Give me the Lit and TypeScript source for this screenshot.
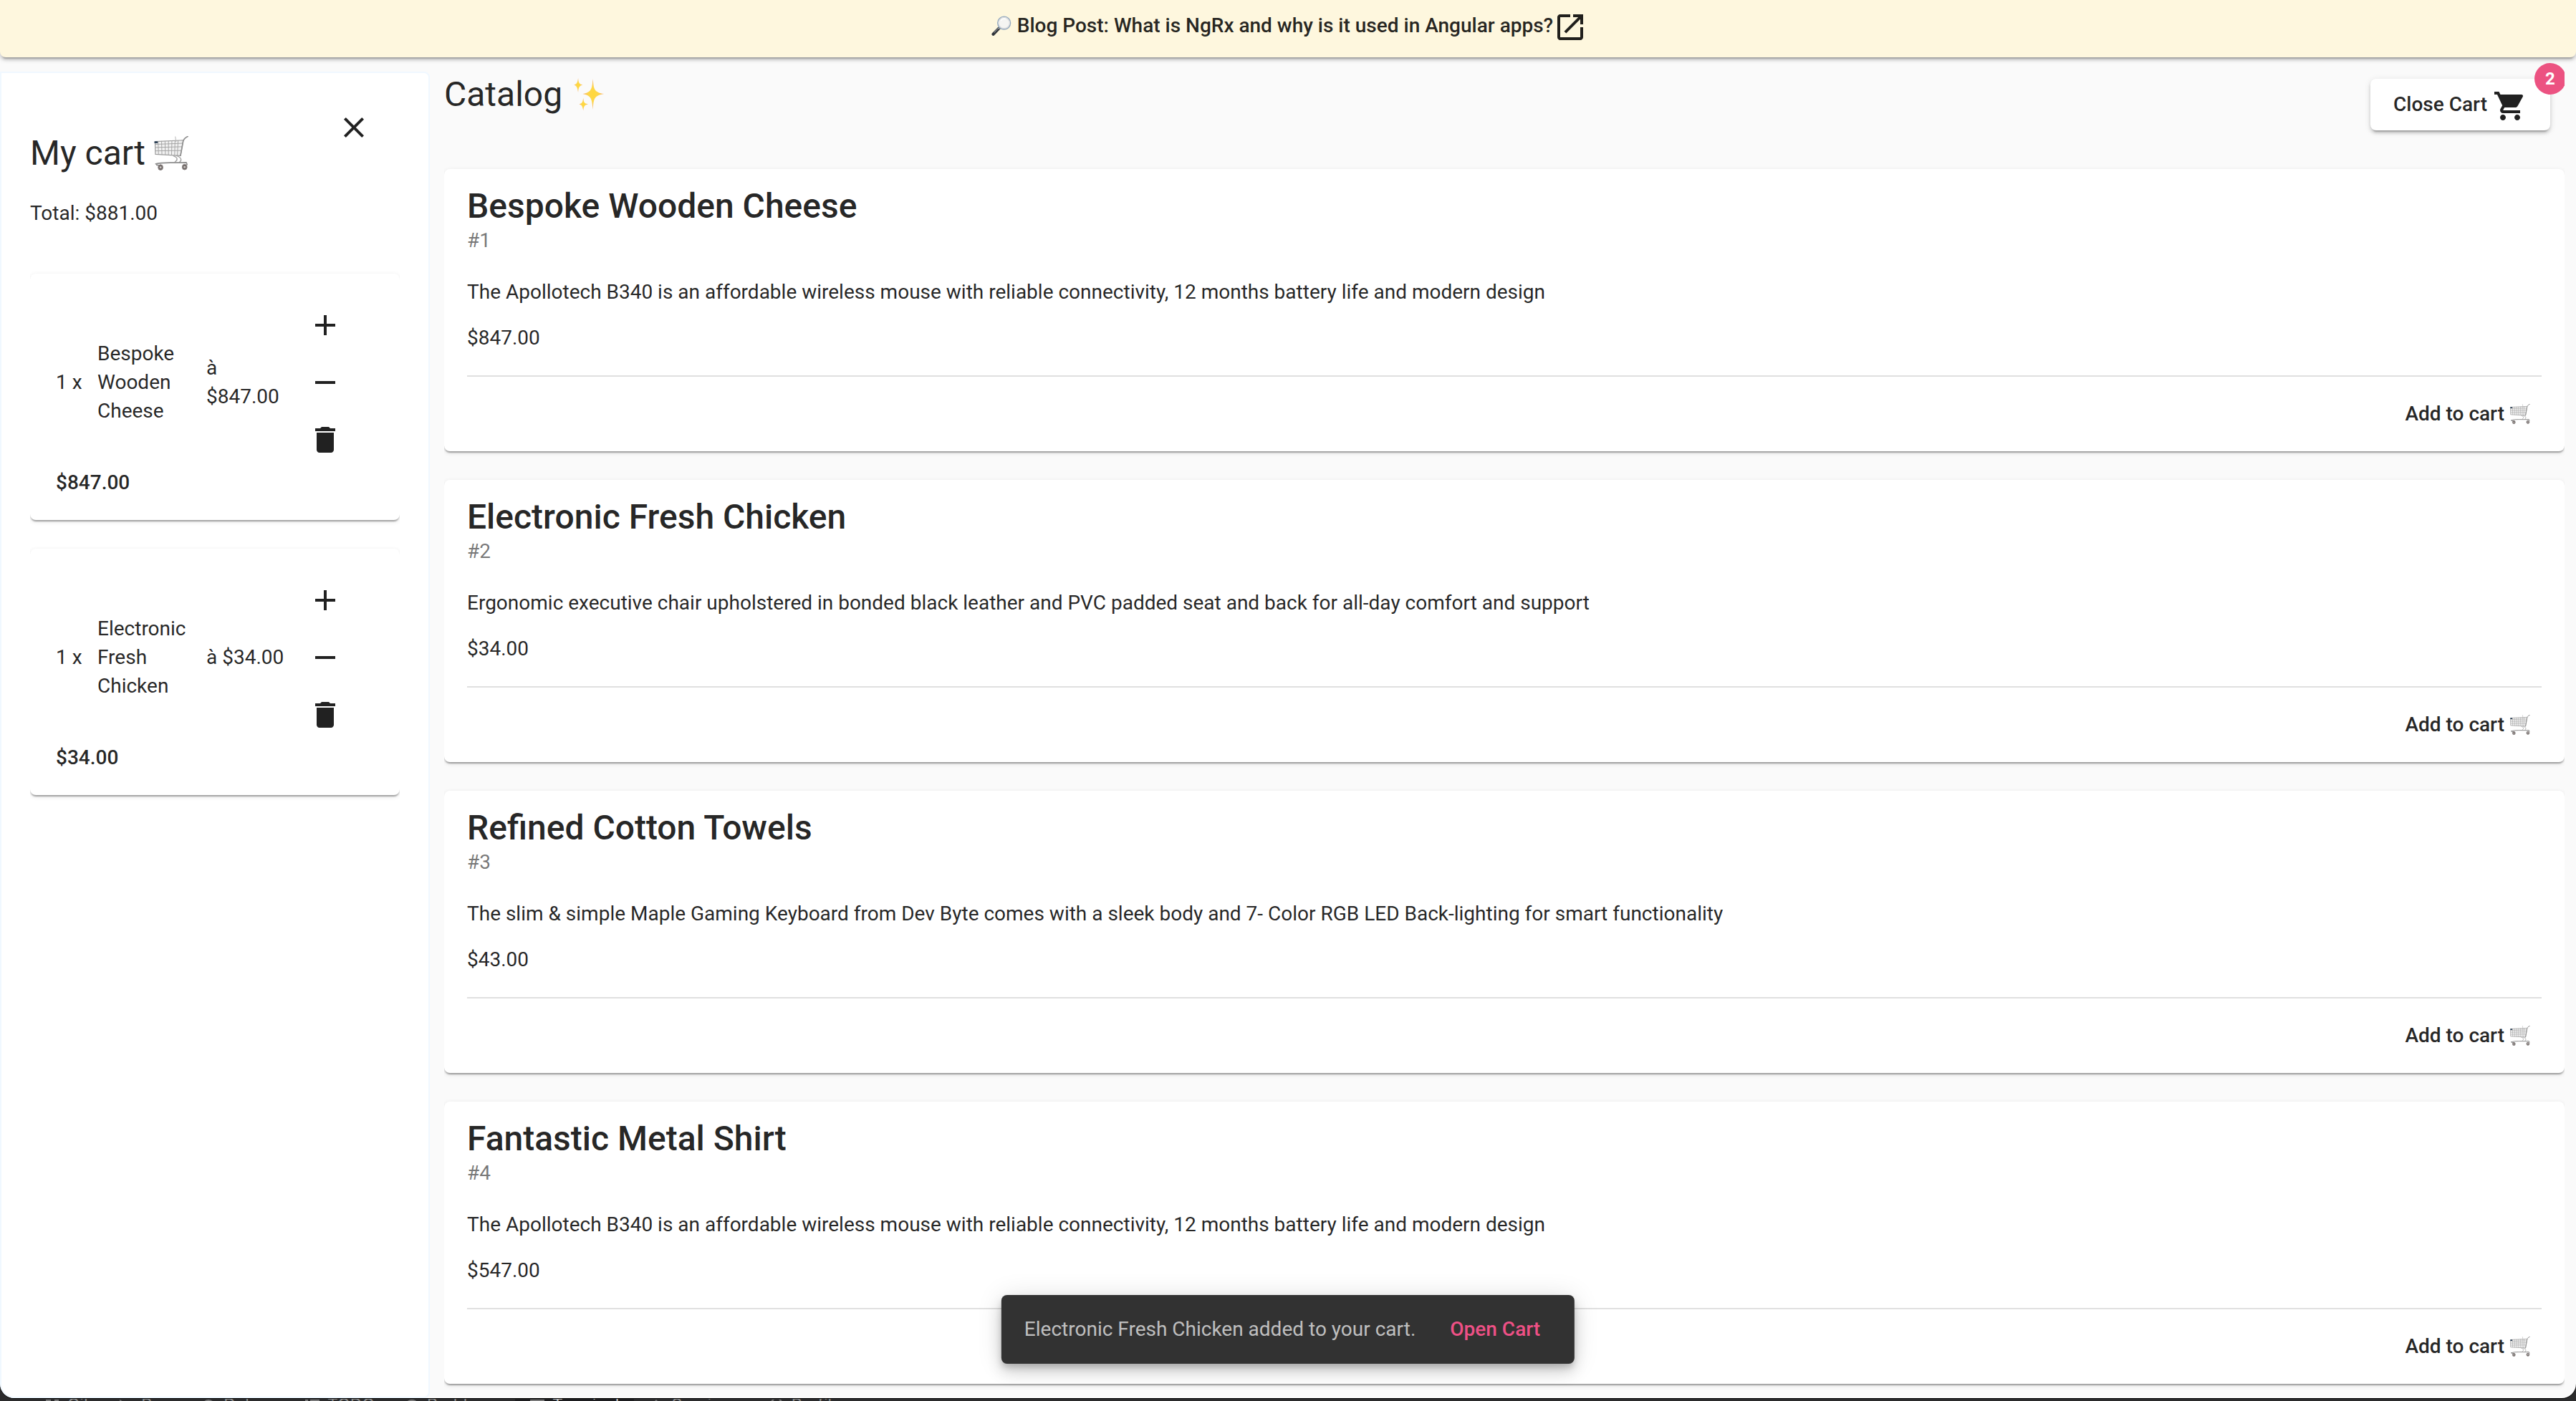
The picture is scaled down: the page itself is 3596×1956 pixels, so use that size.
import { LitElement, html, css, svg } from "lit";
import { customElement, property, state } from "lit/decorators.js";

interface Product {
  id: number;
  name: string;
  description: string;
  price: number;
}

const PRODUCTS: Product[] = [
  {
    id: 1,
    name: "Bespoke Wooden Cheese",
    description:
      "The Apollotech B340 is an affordable wireless mouse with reliable connectivity, 12 months battery life and modern design",
    price: 847,
  },
  {
    id: 2,
    name: "Electronic Fresh Chicken",
    description:
      "Ergonomic executive chair upholstered in bonded black leather and PVC padded seat and back for all-day comfort and support",
    price: 34,
  },
  {
    id: 3,
    name: "Refined Cotton Towels",
    description:
      "The slim & simple Maple Gaming Keyboard from Dev Byte comes with a sleek body and 7- Color RGB LED Back-lighting for smart functionality",
    price: 43,
  },
  {
    id: 4,
    name: "Fantastic Metal Shirt",
    description:
      "The Apollotech B340 is an affordable wireless mouse with reliable connectivity, 12 months battery life and modern design",
    price: 547,
  },
];

const money = (n: number) => `$${n.toFixed(2)}`;

/* Material glyphs on a 24 unit grid */
const GLYPHS: Record<string, string> = {
  add: "M19 13h-6v6h-2v-6H5v-2h6V5h2v6h6v2z",
  remove: "M19 13H5v-2h14v2z",
  delete: "M6 19c0 1.1.9 2 2 2h8c1.1 0 2-.9 2-2V7H6v12zM19 4h-3.500l-1-1h-5l-1 1H5v2h14V4z",
  close:
    "M19 6.410L17.590 5 12 10.590 6.410 5 5 6.410 10.590 12 5 17.590 6.410 19 12 13.410 17.590 19 19 17.590 13.410 12z",
  open: "M19 19H5V5h7V3H5c-1.110 0-2 .9-2 2v14c0 1.100.890 2 2 2h14c1.100 0 2-.9 2-2v-7h-2v7zM14 3v2h3.590l-9.830 9.830 1.410 1.410L19 6.410V10h2V3h-7z",
  cart: "M7 18c-1.100 0-1.990.9-1.990 2S5.900 22 7 22s2-.9 2-2-.9-2-2-2zM1 2v2h2l3.600 7.590-1.350 2.450c-.16.28-.25.61-.25.96 0 1.100.9 2 2 2h12v-2H7.420c-.14 0-.25-.11-.25-.25l.03-.12.9-1.630h7.450c.75 0 1.410-.41 1.750-1.030l3.580-6.490c.08-.14.12-.31.12-.48 0-.55-.45-1-1-1H5.210l-.94-2H1zm16 16c-1.100 0-1.990.9-1.990 2s.89 2 1.990 2 2-.9 2-2-.9-2-2-2z",
};

const cartPicture = svg`
  <g fill="none" stroke-linecap="round" stroke-linejoin="round">
    <path d="M3 16 L85 12 L77 57 L4 53 Z" fill="#f1f1f1" stroke="#9c9c9c" stroke-width="2.500" />
    <path d="M12 16 L13 53 M22 15 L23 54 M32 15 L33 54 M42 15 L42 55 M52 14 L51 55 M61 14 L60 56 M70 13 L68 56 M4 24 L83 21 M4 33 L81 31 M4 43 L80 42" stroke="#a3a3a3" stroke-width="2" />
    <path d="M62 2 L64 16" stroke="#b5b5b5" stroke-width="2" />
    <path d="M98 1 C90 5 87 7 85 14 L77 57" stroke="#8f8f8f" stroke-width="3.500" />
    <path d="M57 58 C70 62 69 70 61 75 M66 57 C81 63 81 71 74 76" stroke="#a6a6a6" stroke-width="3" />
    <path d="M5 81 C28 74 58 79 94 77 L96 83 M8 84 L20 86" stroke="#8d8d8d" stroke-width="3.500" />
  </g>
  <g fill="#6f6765" stroke="#8b8585" stroke-width="2">
    <ellipse cx="19" cy="91" rx="7" ry="8" /><ellipse cx="89" cy="90" rx="7" ry="8" />
  </g>
  <circle cx="19" cy="91" r="3" fill="#c9c5c3" /><circle cx="89" cy="90" r="3" fill="#c9c5c3" />
  <rect x="1" y="15" width="10" height="6" rx="1" fill="#2f4358" />`;

const sparklePicture = svg`
  <defs>
    <radialGradient id="gold">
      <stop offset="0" stop-color="#ffd83c" /><stop offset=".5" stop-color="#fdd64d" />
      <stop offset="1" stop-color="#f6a96c" />
    </radialGradient>
  </defs>
  <g fill="url(#gold)">
    <path d="M64 4 C66 37 69 43 96 48 C69 53 66 60 64 94 C61 60 58 53 34 48 C58 43 61 37 64 4Z" />
    <path d="M21 2 C22 16 24 19 34 22 C24 25 22 30 21 44 C19 30 17 25 9 22 C17 19 19 16 21 2Z" />
    <path d="M36 60 C37 73 39 76 50 78 C39 80 37 85 36 97 C34 85 32 80 24 78 C32 76 34 73 36 60Z" />
  </g>`;

const magnifierPicture = svg`
  <path d="M37 63 L9 92" stroke="#30343a" stroke-width="15" stroke-linecap="round" />
  <path d="M34 62 L14 83" stroke="#858a90" stroke-width="4" stroke-linecap="round" />
  <path d="M44 56 L35 65" stroke="#93989e" stroke-width="7" />
  <circle cx="63" cy="36" r="32" fill="#f5f5f2" stroke="#90a6bd" stroke-width="5" />
  <circle cx="63" cy="36" r="27" fill="none" stroke="#dcdcdc" stroke-width="4" />
  <path d="M46 26 C51 16 62 12 71 16" fill="none" stroke="#fff" stroke-width="5" />`;

const PICTURES: Record<string, { label: string; art: unknown }> = {
  cart: { label: "shopping cart", art: cartPicture },
  sparkles: { label: "sparkles", art: sparklePicture },
  magnifier: { label: "magnifying glass", art: magnifierPicture },
};

@customElement("mat-glyph")
class MatGlyph extends LitElement {
  @property() name = "add";
  static styles = css`
    :host { display: block; width: 48px; height: 48px; flex: none; }
    .glyph { display: block; width: 100%; height: 100%; fill: currentColor; }
  `;
  render() {
    return html`<svg class="glyph" viewBox="0 0 24 24" aria-hidden="true">
      <path d=${GLYPHS[this.name]}></path>
    </svg>`;
  }
}

@customElement("emoji-picture")
class EmojiPicture extends LitElement {
  @property() name = "cart";
  static styles = css`
    :host { display: block; width: 1em; height: 1em; flex: none; }
    .art { display: block; width: 100%; height: 100%; }
  `;
  render() {
    const p = PICTURES[this.name];
    return html`<svg class="art" viewBox="0 0 100 100" role="img" aria-label=${p.label}>${p.art}</svg>`;
  }
}

const shared = css`
  button { font: inherit; color: inherit; border: 0; margin: 0; background: none; cursor: pointer; }
  h1, h2, p, ul { margin: 0; padding: 0; font-weight: 400; }
  ul { list-style: none; }
  .raised {
    background: #fff;
    border-radius: 8px;
    box-shadow: 0 4px 2px -2px rgba(0, 0, 0, 0.2), 0 2px 2px rgba(0, 0, 0, 0.14),
      0 2px 6px rgba(0, 0, 0, 0.12);
  }
`;

@customElement("product-card")
class ProductCard extends LitElement {
  @property({ attribute: false }) product!: Product;
  static styles = [
    shared,
    css`
      :host { display: block; }
      .card { padding: 32px 32px 16px; }
      .name { font-size: 48px; font-weight: 500; line-height: 40px; }
      .number { margin-top: 8px; color: rgba(0, 0, 0, 0.54); }
      .description { margin-top: 32px; }
      .price { margin-top: 24px; }
      .actions {
        display: flex;
        justify-content: flex-end;
        margin-top: 32px;
        padding-top: 16px;
        border-top: 2px solid #e0e0e0;
      }
      .add {
        display: flex;
        align-items: center;
        gap: 8px;
        padding: 0 16px;
        line-height: 72px;
        font-weight: 500;
      }
    `,
  ];
  render() {
    const p = this.product;
    return html`<article class="card raised">
      <h2 class="name">${p.name}</h2>
      <p class="number">#${p.id}</p>
      <p class="description">${p.description}</p>
      <p class="price">${money(p.price)}</p>
      <div class="actions">
        <button class="add">Add to cart <emoji-picture name="cart"></emoji-picture></button>
      </div>
    </article>`;
  }
}

@customElement("cart-item")
class CartItem extends LitElement {
  @property({ attribute: false }) product!: Product;
  @property({ type: Number }) quantity = 1;
  static styles = [
    shared,
    css`
      :host { display: block; }
      .item { padding: 32px; }
      .row {
        display: grid;
        grid-template-columns: 46px 1fr 114px 80px;
        column-gap: 12px;
        align-items: center;
        padding: 0 32px 0 4px;
      }
      .icon { display: block; width: 80px; height: 80px; padding: 16px; }
      .sum { padding-left: 4px; font-weight: 500; }
    `,
  ];
  render() {
    const p = this.product;
    return html`<article class="item raised">
      <div class="row">
        <p>${this.quantity} x</p>
        <p>${p.name}</p>
        <p>à ${money(p.price)}</p>
        <div>
          <button class="icon" aria-label="Add one"><mat-glyph name="add"></mat-glyph></button>
          <button class="icon" aria-label="Remove one"><mat-glyph name="remove"></mat-glyph></button>
          <button class="icon" aria-label="Delete"><mat-glyph name="delete"></mat-glyph></button>
        </div>
      </div>
      <p class="sum">${money(p.price * this.quantity)}</p>
    </article>`;
  }
}

const TABS = [
  { label: "Git", d: "M1 0h7v20H1zM13 0h6v20h-6z" },
  { label: "Run", d: "M1 0l18 10L1 20z" },
  { label: "Debug", d: "M10 0a9 9 0 0 1 9 9v11H1V9a9 9 0 0 1 9-9z" },
  { label: "TODO", d: "M0 0h4v3H0zM7 0h13v3H7zM0 8h4v3H0zM7 8h13v3H7z" },
  { label: "Problems", d: "M10 0a10 10 0 1 0 .1 0z" },
  { label: "Terminal", d: "M0 0h20v18H0z", active: true },
  { label: "Services", d: "M10 0l10 10-10 10L0 10z" },
  { label: "Profiler", d: "M4 0a14 14 0 0 0 0 20h3a14 14 0 0 1 0-20zM13 0a14 14 0 0 1 0 20h3a14 14 0 0 0 0-20z" },
];

@customElement("app-root")
class AppRoot extends LitElement {
  @state() private cart = PRODUCTS.slice(0, 2);

  static styles = [
    shared,
    css`
      :host {
        display: flex;
        flex-direction: column;
        height: 100vh;
        overflow: hidden;
        background: #2b2b2c;
        color: rgba(0, 0, 0, 0.87);
        font: 400 28px/40px Roboto, sans-serif;
      }
      .window {
        position: relative;
        display: flex;
        flex-direction: column;
        flex: 1;
        min-height: 0;
        overflow: hidden;
        background: #fafafa;
        border-radius: 0 0 20px 20px;
        box-shadow: 0 1px 0 #000;
      }
      .banner {
        z-index: 1;
        flex: none;
        padding-bottom: 8px;
        background: #fef7de;
        border-radius: 0 0 8px 8px;
        box-shadow: 0 6px 2px -4px rgba(0, 0, 0, 0.2), 0 4px 4px rgba(0, 0, 0, 0.14),
          0 2px 10px rgba(0, 0, 0, 0.12);
      }
      .post {
        display: flex;
        justify-content: center;
        align-items: center;
        gap: 8px;
        height: 72px;
        padding-left: 4px;
        font-weight: 500;
        color: inherit;
        text-decoration: none;
      }
      .post-title { display: flex; align-items: center; }
      .post-title mat-glyph, .toggle mat-glyph { padding-top: 4px; }
      .body { display: flex; flex: 1; min-height: 0; gap: 20px; padding-right: 16px; }
      .cart {
        flex: none;
        box-sizing: border-box;
        width: 600px;
        margin-top: 20px;
        padding: 36px 40px;
        background: #fff;
        border: 2px solid #f0f8ff;
        border-radius: 0 8px 8px 20px;
      }
      .cart .stack { overflow-x: clip; }
      .cart-head { display: flex; justify-content: space-between; align-items: flex-start; padding-right: 24px; }
      .title { display: flex; align-items: center; gap: 12px; font-size: 48px; line-height: 64px; }
      .cart-head .title { padding-top: 44px; }
      .close { width: 80px; height: 80px; padding: 16px; }
      .total { margin: 32px 0 64px; }
      .stack { display: grid; gap: 40px; }
      .catalog { flex: 1; min-width: 0; overflow: hidden; }
      .catalog-head {
        display: flex;
        justify-content: space-between;
        align-items: flex-start;
        padding: 20px 20px 54px 0;
      }
      .toggle {
        position: relative;
        display: flex;
        align-items: center;
        gap: 8px;
        height: 72px;
        margin-top: 10px;
        padding: 0 32px;
        font-weight: 500;
        box-shadow: 0 6px 2px -4px rgba(0, 0, 0, 0.2), 0 4px 4px rgba(0, 0, 0, 0.14),
          0 2px 10px rgba(0, 0, 0, 0.12);
      }
      .badge {
        position: absolute;
        top: -22px;
        right: -22px;
        width: 44px;
        border-radius: 50%;
        background: #ec5281;
        color: #fff;
        font-size: 24px;
        font-weight: 700;
        line-height: 44px;
        text-align: center;
      }
      .snack {
        position: absolute;
        z-index: 2;
        left: 50%;
        bottom: 48px;
        transform: translateX(-50%);
        display: flex;
        gap: 32px;
        padding: 28px 32px;
        border-radius: 8px;
        background: #323232;
        color: rgba(255, 255, 255, 0.7);
        white-space: nowrap;
        box-shadow: 0 6px 10px -2px rgba(0, 0, 0, 0.2), 0 12px 20px rgba(0, 0, 0, 0.14),
          0 2px 36px rgba(0, 0, 0, 0.12);
      }
      .snack-action { padding: 0 16px; color: #ee5085; font-weight: 500; }
      .dock {
        display: flex;
        flex: none;
        height: 4px;
        padding-left: 42px;
        overflow: hidden;
        color: #8b8b8b;
        font: 23px/26px Inter, sans-serif;
      }
      .tab { display: flex; gap: 11px; padding: 0 21px; }
      .tab.active { background: #1d1d1f; color: #c4c4c4; }
      .tab-icon { width: 20px; height: 20px; margin-top: 2px; fill: #7a7a7a; }
      .tab-label { margin-top: -4px; }
    `,
  ];

  render() {
    const total = this.cart.reduce((sum, p) => sum + p.price, 0);
    return html`
      <div class="window">
        <header class="banner">
          <a class="post" href="#blog">
            <emoji-picture name="magnifier"></emoji-picture>
            <span class="post-title">
              Blog Post: What is NgRx and why is it used in Angular apps?
              <mat-glyph name="open"></mat-glyph>
            </span>
          </a>
        </header>
        <div class="body">
          <aside class="cart">
            <div class="cart-head">
              <h1 class="title">My cart <emoji-picture name="cart"></emoji-picture></h1>
              <button class="close" aria-label="Close"><mat-glyph name="close"></mat-glyph></button>
            </div>
            <p class="total">Total: ${money(total)}</p>
            <ul class="stack">
              ${this.cart.map((p) => html`<li><cart-item .product=${p}></cart-item></li>`)}
            </ul>
          </aside>
          <main class="catalog">
            <div class="catalog-head">
              <h1 class="title">Catalog <emoji-picture name="sparkles"></emoji-picture></h1>
              <button class="toggle raised">
                Close Cart <mat-glyph name="cart"></mat-glyph>
                <span class="badge">${this.cart.length}</span>
              </button>
            </div>
            <ul class="stack">
              ${PRODUCTS.map((p) => html`<li><product-card .product=${p}></product-card></li>`)}
            </ul>
          </main>
        </div>
        <div class="snack" role="status">
          <span>Electronic Fresh Chicken added to your cart.</span>
          <button class="snack-action">Open Cart</button>
        </div>
      </div>
      <footer class="dock">
        ${TABS.map(
          (t) => html`<span class="tab ${t.active ? "active" : ""}">
            <svg class="tab-icon" viewBox="0 0 20 20" aria-hidden="true"><path d=${t.d}></path></svg>
            <span class="tab-label">${t.label}</span>
          </span>`
        )}
      </footer>
    `;
  }
}
